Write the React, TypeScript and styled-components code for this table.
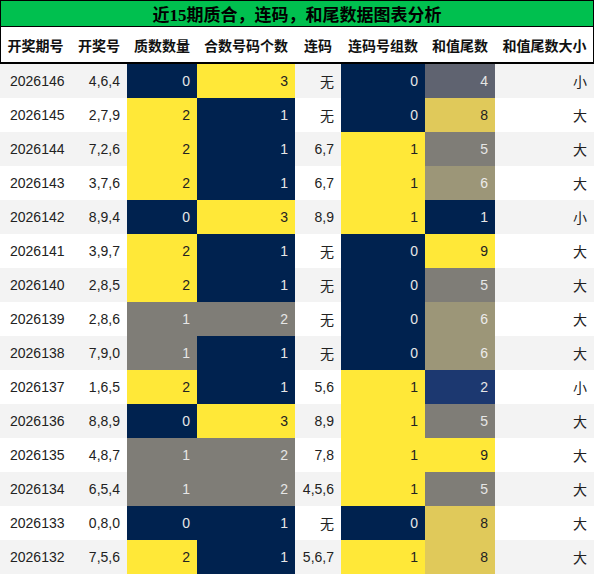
import styled, { createGlobalStyle } from "styled-components";

const GlobalStyle = createGlobalStyle`
    body {
        margin: 0;
        background: #ffffff;
        font-family: "Liberation Sans", "Noto Sans CJK SC", sans-serif;
    }
`;

const COLS = "71px 56px 70px 98px 46px 84px 70px 99px";

const Page = styled.div`
    width: 594px;
`;

const Title = styled.div`
    height: 25px;
    background: #00c04f;
    border: 1px solid #000;
    display: flex;
    align-items: center;
    justify-content: center;
    font-family: "Liberation Serif", "Noto Sans CJK SC", serif;
    font-weight: bold;
    font-size: 17px;
    color: #000;
`;

const HeadRow = styled.div`
    display: grid;
    grid-template-columns: ${COLS};
    height: 35px;
    border-bottom: 2px solid #000;
    box-shadow: inset 1px 0 #000, inset -1px 0 #000;
`;

const HeadCell = styled.div`
    display: flex;
    align-items: center;
    justify-content: center;
    white-space: nowrap;
    font-family: "Noto Sans CJK SC", sans-serif;
    font-weight: bold;
    font-size: 14px;
    color: #111;
`;

const Row = styled.div<{ $odd: boolean }>`
    display: grid;
    grid-template-columns: ${COLS};
    height: 34px;
    background: ${(p) => (p.$odd ? "#f3f3f3" : "#ffffff")};
`;

const palette: Record<string, { bg: string; fg: string }> = {
    navy: { bg: "#00224f", fg: "#e6e6e6" },
    yellow: { bg: "#ffe838", fg: "#222222" },
    gray: { bg: "#7f7d77", fg: "#e6e6e6" },
    tan: { bg: "#9c9678", fg: "#ececec" },
    slate: { bg: "#5f6370", fg: "#e6e6e6" },
    gold: { bg: "#e0c95a", fg: "#222222" },
    blue: { bg: "#1c3870", fg: "#e6e6e6" },
};

const Cell = styled.div<{ $tone?: string; $left?: boolean }>`
    display: flex;
    align-items: center;
    justify-content: ${(p) => (p.$left ? "flex-start" : "flex-end")};
    padding: ${(p) => (p.$left ? "0 0 0 10px" : "0 7px 0 0")};
    font-size: 14px;
    white-space: nowrap;
    background: ${(p) => (p.$tone ? palette[p.$tone].bg : "transparent")};
    color: ${(p) => (p.$tone ? palette[p.$tone].fg : "#222")};
    font-family: "Liberation Sans", "Noto Sans CJK SC", sans-serif;
`;

const headers = ["开奖期号", "开奖号", "质数数量", "合数号码个数", "连码", "连码号组数", "和值尾数", "和值尾数大小"];

const qTone: Record<number, string> = { 0: "navy", 1: "gray", 2: "yellow" };
const hTone: Record<number, string> = { 1: "navy", 2: "gray", 3: "yellow" };
const gTone: Record<number, string> = { 0: "navy", 1: "yellow" };
const tailTone: Record<number, string> = { 1: "navy", 2: "blue", 4: "slate", 5: "gray", 6: "tan", 8: "gold", 9: "yellow" };

type Draw = [string, string, number, number, string, number, number, string];

const rows: Draw[] = [
    ["2026146", "4,6,4", 0, 3, "无", 0, 4, "小"],
    ["2026145", "2,7,9", 2, 1, "无", 0, 8, "大"],
    ["2026144", "7,2,6", 2, 1, "6,7", 1, 5, "大"],
    ["2026143", "3,7,6", 2, 1, "6,7", 1, 6, "大"],
    ["2026142", "8,9,4", 0, 3, "8,9", 1, 1, "小"],
    ["2026141", "3,9,7", 2, 1, "无", 0, 9, "大"],
    ["2026140", "2,8,5", 2, 1, "无", 0, 5, "大"],
    ["2026139", "2,8,6", 1, 2, "无", 0, 6, "大"],
    ["2026138", "7,9,0", 1, 1, "无", 0, 6, "大"],
    ["2026137", "1,6,5", 2, 1, "5,6", 1, 2, "小"],
    ["2026136", "8,8,9", 0, 3, "8,9", 1, 5, "大"],
    ["2026135", "4,8,7", 1, 2, "7,8", 1, 9, "大"],
    ["2026134", "6,5,4", 1, 2, "4,5,6", 1, 5, "大"],
    ["2026133", "0,8,0", 0, 1, "无", 0, 8, "大"],
    ["2026132", "7,5,6", 2, 1, "5,6,7", 1, 8, "大"],
];

export default function App() {
    return (
        <Page>
            <GlobalStyle />
            <Title>近15期质合，连码，和尾数据图表分析</Title>
            <HeadRow>
                {headers.map((h) => (
                    <HeadCell key={h}>{h}</HeadCell>
                ))}
            </HeadRow>
            {rows.map((r, i) => (
                <Row key={r[0]} $odd={i % 2 === 0}>
                    <Cell $left>{r[0]}</Cell>
                    <Cell>{r[1]}</Cell>
                    <Cell $tone={qTone[r[2]]}>{r[2]}</Cell>
                    <Cell $tone={hTone[r[3]]}>{r[3]}</Cell>
                    <Cell>{r[4]}</Cell>
                    <Cell $tone={gTone[r[5]]}>{r[5]}</Cell>
                    <Cell $tone={tailTone[r[6]]}>{r[6]}</Cell>
                    <Cell>{r[7]}</Cell>
                </Row>
            ))}
        </Page>
    );
}
